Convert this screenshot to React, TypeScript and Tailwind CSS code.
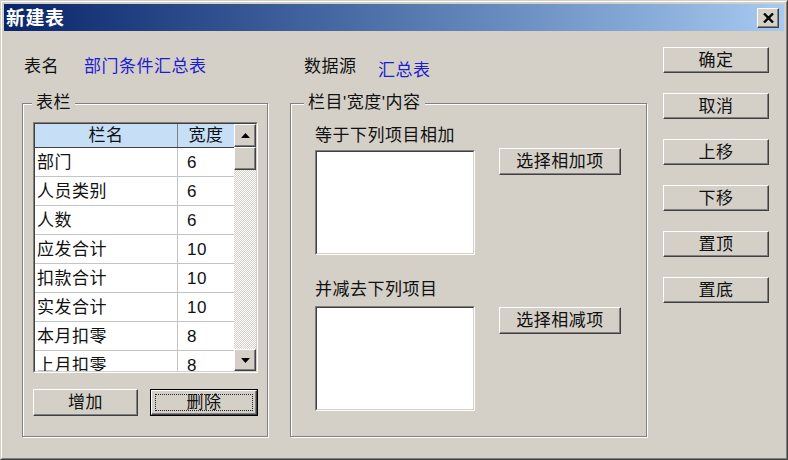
import React from 'react';

const rows = [
  ['部门', '6'],
  ['人员类别', '6'],
  ['人数', '6'],
  ['应发合计', '10'],
  ['扣款合计', '10'],
  ['实发合计', '10'],
  ['本月扣零', '8'],
  ['上月扣零', '8'],
];

const raised =
  'border border-t-white border-l-white border-r-[#404040] border-b-[#404040] shadow-[inset_-1px_-1px_0_#808080] bg-[#d4d0c8]';

const Btn = ({ label, className = '' }: { label: string; className?: string }) => (
  <button className={`${raised} flex items-center justify-center text-[17px] leading-none tracking-[0.5px] text-[#111] ${className}`}>
    {label}
  </button>
);

const Group = ({ title, labelLeft, className, children }: { title: string; labelLeft: string; className: string; children: React.ReactNode }) => (
  <div className={`relative border border-[#808080] shadow-[inset_1px_1px_0_#fff,1px_1px_0_#fff] ${className}`}>
    <span className={`absolute -top-[11px] ${labelLeft} bg-[#d4d0c8] px-[4px] text-[17px] leading-[20px] tracking-[0.5px]`}>{title}</span>
    {children}
  </div>
);

const ListBox = () => (
  <div className="w-[160px] h-[105px] border border-t-[#808080] border-l-[#808080] border-r-white border-b-white">
    <div className="w-full h-full bg-white border border-t-[#404040] border-l-[#404040] border-r-[#d4d0c8] border-b-[#d4d0c8]" />
  </div>
);

const Arrow = ({ down }: { down?: boolean }) => (
  <svg width="9" height="5" viewBox="0 0 9 5">
    <path d={down ? 'M0 0h9L4.5 5z' : 'M4.5 0L9 5H0z'} fill="#000" />
  </svg>
);

const App = () => {
  return (
    <div className="w-[788px] h-[460px] overflow-hidden bg-[#d4d0c8] border border-t-[#d4d0c8] border-l-[#d4d0c8] border-r-[#404040] border-b-[#404040] font-[family-name:'Liberation_Sans','Noto_Sans_CJK_SC',sans-serif] text-[#111]">
      <div className="flex flex-col h-full border border-t-white border-l-white border-r-[#808080] border-b-[#808080] p-[2px]">
        {/* title bar */}
        <div className="flex items-center justify-between h-[27px] pl-[2px] pr-[5px] bg-gradient-to-r from-[#0a246a] to-[#a6caf0]">
          <span className="pt-[3px] text-[19px] leading-[20px] font-bold tracking-[0.5px] text-white">新建表</span>
          <button className={`${raised} flex items-center justify-center w-[22px] h-[20px] mt-[1px]`}>
            <svg width="11" height="10" viewBox="0 0 11 10">
              <path d="M1 0.5l9 9M10 0.5l-9 9" stroke="#000" strokeWidth="2.4" />
            </svg>
          </button>
        </div>

        <div className="flex flex-1">
          <div className="flex flex-col w-[643px] pl-[18px]">
            <div className="flex mt-[26px] h-[20px] text-[17px] leading-[20px] tracking-[0.5px]">
              <span className="ml-[2px] w-[60px]">表名</span>
              <span className="w-[220px] text-[#1c1cd0]">部门条件汇总表</span>
              <span className="w-[74px]">数据源</span>
              <span className="mt-[4px] text-[#1c1cd0]">汇总表</span>
            </div>

            <div className="flex gap-[22px] mt-[26px]">
              <Group title="表栏" labelLeft="left-[9px]" className="w-[246px] h-[334px] pl-[10px] pt-[18px]">
                <div className="w-[225px] h-[251px] border border-t-[#808080] border-l-[#808080] border-r-white border-b-white">
                  <div className="flex h-full bg-white overflow-hidden border border-t-[#404040] border-l-[#404040] border-r-[#d4d0c8] border-b-[#d4d0c8]">
                    <div className="flex-1 overflow-hidden text-[17px] tracking-[0.5px]">
                      <div className="flex h-[24px] bg-[#c6def6] border-b border-[#404040] leading-[23px]">
                        <div className="w-[143px] text-center border-r border-[#808080]">栏名</div>
                        <div className="flex-1 text-center">宽度</div>
                      </div>
                      {rows.map(([name, width]) => (
                        <div key={name} className="flex h-[29px] shrink-0 border-b border-[#c4c4c4] leading-[28px]">
                          <div className="w-[143px] pl-[2px] pt-[1px] border-r border-[#c4c4c4] whitespace-nowrap">{name}</div>
                          <div className="flex-1 pl-[9px] pt-[1px]">{width}</div>
                        </div>
                      ))}
                    </div>
                    <div className="flex flex-col w-[22px]">
                      <div className={`${raised} flex items-center justify-center h-[23px]`}>
                        <Arrow />
                      </div>
                      <div className={`${raised} h-[23px]`} />
                      <div className="flex-1 bg-[repeating-conic-gradient(#d4d0c8_0_25%,#ffffff_0_50%)] bg-[length:2px_2px]" />
                      <div className={`${raised} flex items-center justify-center h-[22px]`}>
                        <Arrow down />
                      </div>
                    </div>
                  </div>
                </div>
                <div className="flex gap-[12px] mt-[16px]">
                  <Btn label="增加" className="w-[105px] h-[27px]" />
                  <div className="w-[108px] h-[27px] border border-black">
                    <button className={`${raised} flex items-center justify-center w-full h-full p-[3px]`}>
                      <span className="flex items-center justify-center w-full h-full border border-dotted border-[#222] text-[17px] leading-none tracking-[0.5px]">删除</span>
                    </button>
                  </div>
                </div>
              </Group>

              <Group title="栏目'宽度'内容" labelLeft="left-[13px]" className="w-[357px] h-[334px] pl-[24px] pt-[22px]">
                <div className="text-[17px] leading-[20px] tracking-[0.5px]">等于下列项目相加</div>
                <div className="flex mt-[2px]">
                  <div className="mt-[2px]">
                    <ListBox />
                  </div>
                  <Btn label="选择相加项" className="ml-[24px] w-[122px] h-[27px]" />
                </div>
                <div className="mt-[25px] text-[17px] leading-[20px] tracking-[0.5px]">并减去下列项目</div>
                <div className="flex mt-[6px]">
                  <ListBox />
                  <Btn label="选择相减项" className="ml-[24px] mt-[1px] w-[122px] h-[27px]" />
                </div>
              </Group>
            </div>
          </div>

          <div className="flex flex-col gap-[20px] ml-[16px] mt-[16px]">
            {['确定', '取消', '上移', '下移', '置顶', '置底'].map((l) => (
              <Btn key={l} label={l} className="w-[106px] h-[26px]" />
            ))}
          </div>
        </div>
      </div>
    </div>
  );
};

export default App;
